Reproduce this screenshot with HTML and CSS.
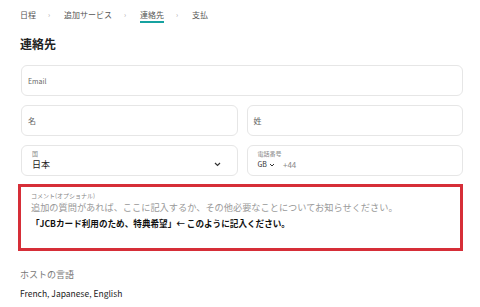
FILE: index.html
```html
<!DOCTYPE html>
<html lang="ja">
<head>
    <meta charset="UTF-8">
    <meta name="viewport" content="width=device-width, initial-scale=1.0">
    <title>連絡先</title>
    <link rel="stylesheet" href="styles.css">
</head>
<body>
    <div class="page">
        <nav class="crumbs">
            <span class="crumb">日程</span>
            <span class="sep">›</span>
            <span class="crumb">追加サービス</span>
            <span class="sep">›</span>
            <span class="crumb current">連絡先</span>
            <span class="sep">›</span>
            <span class="crumb">支払</span>
        </nav>

        <h1>連絡先</h1>

        <div class="form">
            <div class="field">
                <span class="placeholder small">Email</span>
            </div>

            <div class="row">
                <div class="field">
                    <span class="placeholder">名</span>
                </div>
                <div class="field">
                    <span class="placeholder">姓</span>
                </div>
            </div>

            <div class="row">
                <div class="field stacked">
                    <span class="label">国</span>
                    <div class="select">
                        <span class="value">日本</span>
                        <svg class="chevron" width="7" height="5" viewBox="0 0 7 5"><path d="M1 1l2.5 2.5L6 1" fill="none" stroke="#333" stroke-width="1.2"/></svg>
                    </div>
                </div>
                <div class="field stacked">
                    <span class="label">電話番号</span>
                    <div class="phone">
                        <span class="code">GB</span>
                        <svg class="chevron small" width="6" height="4" viewBox="0 0 6 4"><path d="M1 1l2 2 2-2" fill="none" stroke="#333" stroke-width="1"/></svg>
                        <span class="dial">+44</span>
                    </div>
                </div>
            </div>

            <div class="comment">
                <span class="label">コメント(オプショナル)</span>
                <p class="hint">追加の質問があれば、ここに記入するか、その他必要なことについてお知らせください。</p>
                <p class="example">「JCBカード利用のため、特典希望」← このように記入ください。</p>
            </div>
        </div>

        <div class="langs">
            <h2>ホストの言語</h2>
            <p>French, Japanese, English</p>
        </div>
    </div>
</body>
</html>
```

FILE: styles.css
```css
body, html {
    margin: 0;
    padding: 0;
    background-color: #fff;
    font-family: "Noto Sans CJK JP", "Noto Sans", sans-serif;
    color: #222;
}

.page {
    width: 443px;
    padding: 6px 0 0 20px;
}

/* Breadcrumbs */
.crumbs {
    display: flex;
    align-items: center;
    font-size: 8px;
    color: #555;
    height: 16px;
}

.crumbs .sep {
    width: 4px;
    margin: 0 12px;
    color: #aaa;
    font-size: 7px;
}

.crumb.current {
    position: relative;
}

.crumb.current::after {
    content: "";
    position: absolute;
    left: 0;
    right: 0;
    bottom: -3px;
    height: 1.5px;
    background-color: #17a2a0;
}

h1 {
    font-size: 12px;
    font-weight: bold;
    margin: 14px 0 0;
    line-height: 16px;
    color: #222;
}

/* Form */
.form {
    display: flex;
    flex-direction: column;
    gap: 9px;
    margin-top: 13px;
}

.row {
    display: flex;
    gap: 9px;
}

.row .field {
    flex: 1;
}

.field {
    box-sizing: border-box;
    height: 31px;
    border: 1px solid #e6e6e6;
    border-radius: 6px;
    padding: 0 6px;
    display: flex;
    align-items: center;
    margin-left: 1px;
}

.row .field + .field {
    margin-left: 0;
}

.placeholder {
    font-size: 8px;
    color: #666;
}

.placeholder.small {
    font-size: 7px;
}

.field.stacked {
    flex-direction: column;
    align-items: stretch;
    justify-content: center;
    padding: 0 6px 0 10px;
}

.label {
    font-size: 6px;
    color: #888;
    line-height: 8px;
}

.select {
    display: flex;
    justify-content: space-between;
    align-items: center;
    padding-right: 10px;
}

.value {
    font-size: 9px;
    line-height: 13px;
    color: #222;
}

.phone {
    display: flex;
    align-items: center;
    font-size: 7px;
    line-height: 13px;
}

.phone .code {
    color: #333;
}

.chevron.small {
    margin-left: 2px;
}

.phone .dial {
    margin-left: 8px;
    color: #888;
    font-size: 8px;
}

/* Comment */
.comment {
    box-sizing: border-box;
    height: 67px;
    margin: -1px 0 0 -2px;
    width: 445px;
    border: 3px solid #d62e38;
    padding: 4px 10px;
}

.comment .label {
    display: block;
    line-height: 9px;
}

.hint {
    margin: 0;
    font-size: 9.2px;
    line-height: 14px;
    color: #999;
}

.example {
    margin: 2px 0 0;
    font-size: 8.6px;
    line-height: 14px;
    font-weight: bold;
    color: #111;
}

/* Languages */
.langs {
    margin-top: 17px;
}

.langs h2 {
    font-size: 9px;
    font-weight: normal;
    color: #777;
    margin: 0;
    line-height: 14px;
}

.langs p {
    font-size: 8.5px;
    margin: 4px 0 0;
    line-height: 14px;
    color: #222;
}
```
